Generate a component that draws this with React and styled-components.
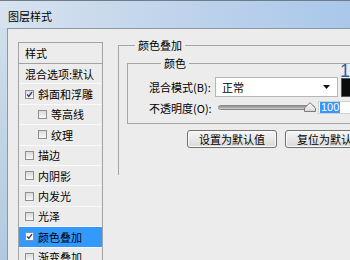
import React from 'react';
import styled, { createGlobalStyle } from 'styled-components';

const GlobalStyle = createGlobalStyle`
  html, body {
    margin: 0;
    padding: 0;
    background: #ececec;
  }
  body {
    font-family: "Noto Sans CJK SC", "Liberation Sans", sans-serif;
    font-size: 11px;
    color: #000;
  }
`;

// window chrome
const Window = styled.div`
  position: relative;
  width: 350px;
  height: 260px;
  overflow: hidden;
  display: flex;
  flex-direction: column;
  background: linear-gradient(180deg, #d4e0ed, #b3c8e0);
`;

const TitleBar = styled.div`
  box-sizing: border-box;
  flex: none;
  height: 28px;
  padding: 3px 0 0 8px;
  display: flex;
  align-items: center;
  border-top: 1px solid #6f7c8a;
  background: linear-gradient(90deg, #d8e3ef 0%, #c6d8ec 35%, #aac7ea 100%);
  font-size: 11px;
  line-height: 14px;
`;

const Frame = styled.div`
  flex: 1;
  min-height: 0;
  display: flex;
  padding-left: 7px;
`;

const Body = styled.div`
  flex: 1;
  display: flex;
  align-items: flex-start;
  gap: 15px;
  padding: 13px 0 0 10px;
  background: #ececec;
  border-left: 1px solid #8c98a6;
  border-top: 1px solid #8c98a6;
`;

// left style list
const StyleList = styled.div`
  flex: none;
  box-sizing: border-box;
  width: 85px;
  border: 1px solid #a3a3a3;
  background: #ececec;
`;

const ListHeader = styled.div`
  height: 20px;
  line-height: 20px;
  padding-left: 6px;
  border-bottom: 1px solid #a3a3a3;
`;

const ListItem = styled.div`
  display: flex;
  align-items: center;
  gap: 4px;
  height: 19.4px;
  padding-left: ${p => (p.$indent ? 19 : 6)}px;
  border-bottom: 1px solid #fafafa;
  background: ${p => (p.$selected ? '#3399ff' : 'transparent')};
  white-space: nowrap;
`;

const Box = styled.span`
  box-sizing: border-box;
  flex: none;
  width: 9px;
  height: 9px;
  border: 1px solid #8e8f90;
  background: ${p => (p.$selected ? '#ffffff' : 'linear-gradient(180deg, #dadada, #f8f8f8)')};
  display: flex;
  align-items: center;
  justify-content: center;
`;

const Check = ({ checked, selected }) => (
  <Box $selected={selected}>
    {checked && (
      <svg width="7" height="7" viewBox="0 0 7 7">
        <path d="M1 3.4 L2.8 5.4 L6 1.2" fill="none" stroke="#23407a" strokeWidth="1.4" />
      </svg>
    )}
  </Box>
);

// right panel groups
const OuterGroup = styled.fieldset`
  box-sizing: border-box;
  flex: 1;
  min-width: 0;
  height: 137px;
  margin: -4px 0 0 0;
  padding: 0;
  border: none;
  border-top: 1px solid #a6a6a6;
  border-left: 1px solid #a6a6a6;
`;

const Legend = styled.legend`
  margin-left: ${p => p.$offset}px;
  padding: 0 3px;
  font-size: 11px;
  line-height: 14px;
`;

const InnerGroup = styled.fieldset`
  box-sizing: border-box;
  width: 260px;
  min-width: 0;
  margin: 4px 0 0 8px;
  padding: 7px 0 9px 21px;
  border: 1px solid #a6a6a6;
`;

const FieldRow = styled.div`
  display: flex;
  align-items: center;
  height: ${p => p.$h}px;
  margin-top: ${p => p.$top || 0}px;
`;

const Label = styled.span`
  flex: none;
  width: 66px;
  white-space: nowrap;
`;

const Select = styled.div`
  box-sizing: border-box;
  flex: none;
  width: 123px;
  height: 20px;
  display: flex;
  align-items: center;
  justify-content: space-between;
  padding: 0 7px 0 6px;
  background: #fff;
  border: 1px solid #b4b6ba;
`;

const Swatch = styled.div`
  box-sizing: border-box;
  flex: none;
  width: 14px;
  height: 19px;
  margin-left: 3px;
  background: #0b0b0b;
  border: 1px solid #555;
`;

const Track = styled.div`
  position: relative;
  box-sizing: border-box;
  flex: none;
  width: 97px;
  height: 5px;
  margin-left: 3px;
  border: 1px solid #8a8a8a;
  border-radius: 3px;
  background: linear-gradient(180deg, #8e8e8e, #cfcfcf);
`;

const Thumb = styled.svg`
  position: absolute;
  left: 85px;
  top: -4px;
`;

const NumberBox = styled.div`
  box-sizing: border-box;
  flex: none;
  width: 40px;
  height: 13px;
  margin-left: 3px;
  padding-left: 1px;
  display: flex;
  align-items: center;
  background: #fff;
  border: 1px solid #d0d0d0;
  font-family: "Liberation Sans", sans-serif;
  font-size: 11px;
`;

const Highlight = styled.span`
  background: #3399ff;
  color: #fff;
  padding: 0 1px;
  line-height: 11px;
`;

const ButtonRow = styled.div`
  display: flex;
  gap: 8px;
  margin: 6px 0 0 68px;
`;

const Button = styled.div`
  box-sizing: border-box;
  flex: none;
  width: 90px;
  height: 18px;
  display: flex;
  align-items: center;
  justify-content: center;
  border: 1px solid #707070;
  border-radius: 3px;
  background: linear-gradient(180deg, #f6f6f6 0%, #e8e8e8 50%, #d9d9d9 100%);
  box-shadow: inset 0 0 0 1px #fbfbfb;
  white-space: nowrap;
`;

const Marker = styled.span`
  position: absolute;
  left: 340px;
  top: 62px;
  font-family: "Liberation Sans", sans-serif;
  font-size: 18px;
  line-height: 18px;
  color: #2f5fa8;
`;

const items = [
  { name: '斜面和浮雕', checked: true },
  { name: '等高线', indent: true },
  { name: '纹理', indent: true },
  { name: '描边' },
  { name: '内阴影' },
  { name: '内发光' },
  { name: '光泽' },
  { name: '颜色叠加', checked: true, selected: true },
  { name: '渐变叠加' },
  { name: '图案叠加' },
  { name: '外发光' },
  { name: '投影' },
];

export default function App() {
  return (
    <Window>
      <GlobalStyle />
      <TitleBar>图层样式</TitleBar>
      <Frame>
        <Body>
          <StyleList>
            <ListHeader>样式</ListHeader>
            <ListItem>混合选项:默认</ListItem>
            {items.map(it => (
              <ListItem key={it.name} $indent={it.indent} $selected={it.selected}>
                <Check checked={it.checked} selected={it.selected} />
                {it.name}
              </ListItem>
            ))}
          </StyleList>

          <OuterGroup>
            <Legend $offset={16}>颜色叠加</Legend>
            <InnerGroup>
              <Legend $offset={12}>颜色</Legend>
              <FieldRow $h={20}>
                <Label>混合模式(B):</Label>
                <Select>
                  正常
                  <svg width="7" height="4" viewBox="0 0 7 4">
                    <path d="M0 0 L7 0 L3.5 4 Z" fill="#111" />
                  </svg>
                </Select>
                <Swatch />
              </FieldRow>
              <FieldRow $h={13} $top={4}>
                <Label>不透明度(O):</Label>
                <Track>
                  <Thumb width="12" height="10" viewBox="0 0 12 10">
                    <defs>
                      <linearGradient id="tg" x1="0" y1="0" x2="0" y2="1">
                        <stop offset="0" stopColor="#ffffff" />
                        <stop offset="1" stopColor="#d6d6d6" />
                      </linearGradient>
                    </defs>
                    <path d="M0.5 9.5 L0.5 6 L6 0.7 L11.5 6 L11.5 9.5 Z" fill="url(#tg)" stroke="#7a7a7a" />
                  </Thumb>
                </Track>
                <NumberBox>
                  <Highlight>100</Highlight>
                </NumberBox>
              </FieldRow>
            </InnerGroup>
            <ButtonRow>
              <Button>设置为默认值</Button>
              <Button>复位为默认值</Button>
            </ButtonRow>
          </OuterGroup>
        </Body>
      </Frame>
      <Marker>1</Marker>
    </Window>
  );
}
